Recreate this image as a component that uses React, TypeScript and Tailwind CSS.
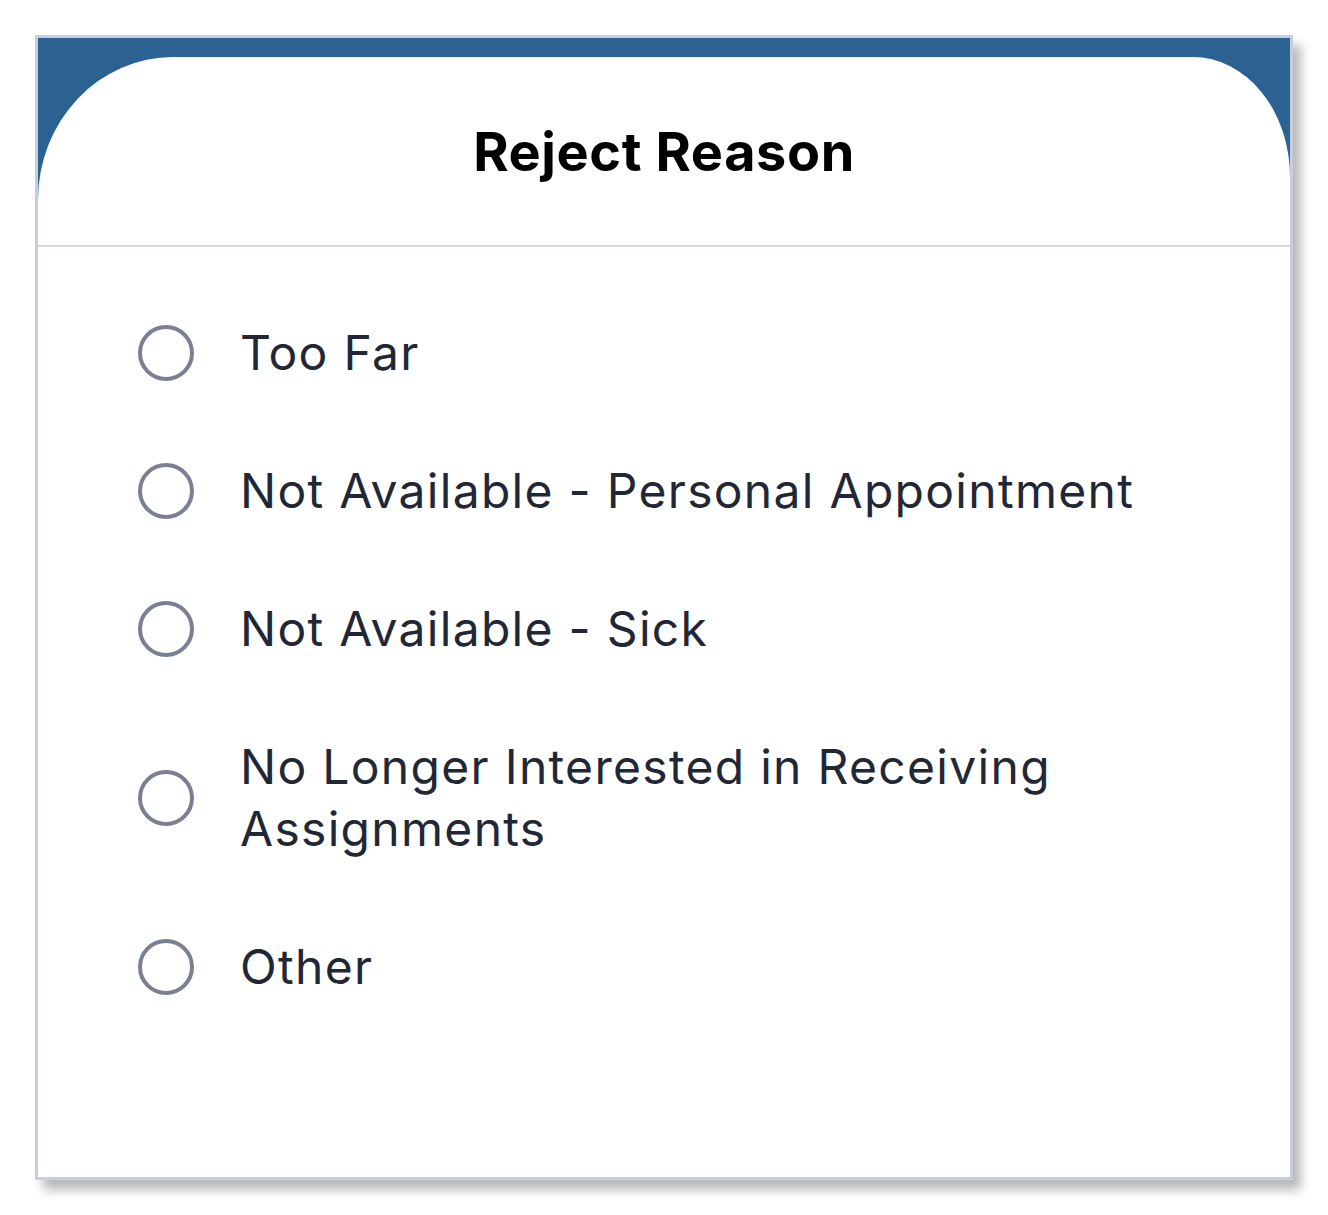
import React from "react";

const reasons = [
  "Too Far",
  "Not Available - Personal Appointment",
  "Not Available - Sick",
  "No Longer Interested in Receiving Assignments",
  "Other",
];

export default function App() {
  return (
    <div className="w-[1328px] h-[1215px] bg-white pt-[35px] pl-[35px]" style={{ fontFamily: "Inter, 'Noto Sans', sans-serif" }}>
      <div className="w-[1258px] h-[1145px] border-[3px] border-[#c5ceda] bg-[#2b6291] pt-[19px] shadow-[8px_10px_10px_rgba(0,0,0,0.28)] flex flex-col">
        <div className="flex-1 bg-white rounded-tl-[135px_143px] rounded-tr-[97px_120px] flex flex-col">
          <div className="h-[190px] flex items-center justify-center border-b-2 border-[#d3d8e8]">
            <h1 className="text-[54px] font-bold text-black tracking-[0.6px] leading-none pt-[2px]">Reject Reason</h1>
          </div>
          <div className="flex flex-col gap-[76px] pt-[75px] pl-[100px] pr-[60px]">
            {reasons.map((r) => (
              <div key={r} className="flex items-center gap-[46px]">
                <div className="w-[56px] h-[56px] shrink-0 rounded-full border-[4px] border-[#7a7f93]" />
                <span className="text-[48px] leading-[62px] tracking-[1.3px] text-[#222736] max-w-[920px]">{r}</span>
              </div>
            ))}
          </div>
        </div>
      </div>
    </div>
  );
}
